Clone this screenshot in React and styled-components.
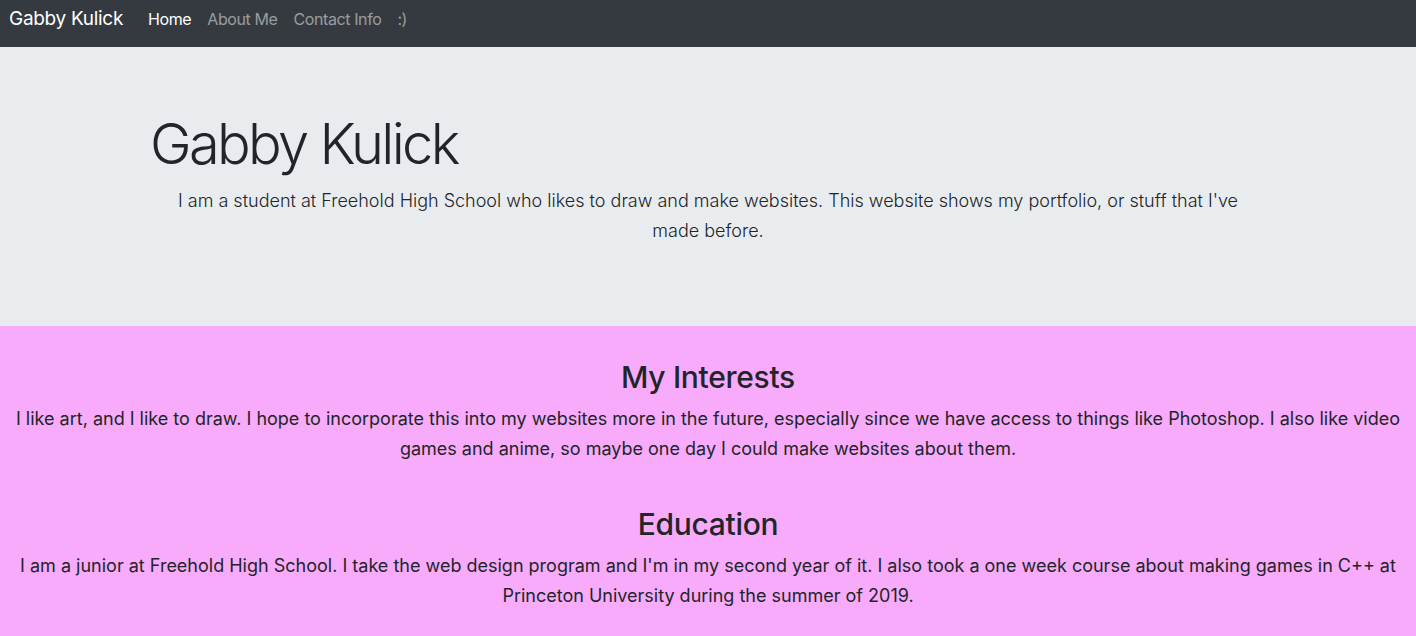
import React from "react";
import styled, { createGlobalStyle } from "styled-components";

const GlobalStyle = createGlobalStyle`
  html, body {
    margin: 0;
    padding: 0;
  }
  body {
    background: #f9abfb;
    color: #212529;
    font-family: Inter, "Noto Sans", "Liberation Sans", sans-serif;
  }
  * {
    box-sizing: border-box;
  }
`;

const Navbar = styled.nav`
  display: flex;
  align-items: flex-start;
  height: 47px;
  padding: 4px 9px 0;
  background: #343a40;
`;

const Brand = styled.a`
  font-size: 19px;
  line-height: 30px;
  color: #fff;
  margin-right: 17px;
  text-decoration: none;
  letter-spacing: -0.3px;
`;

const NavList = styled.ul`
  display: flex;
  margin: 0;
  padding: 0;
  list-style: none;
`;

const NavLink = styled.a`
  display: block;
  padding: 4px 8px;
  font-size: 16px;
  line-height: 22px;
  letter-spacing: -0.4px;
  text-decoration: none;
  color: ${({ active }) => (active ? "#fff" : "rgba(255, 255, 255, 0.5)")};
`;

const Jumbotron = styled.header`
  background: #e9ecef;
  padding: 64px 0;
  margin-bottom: 32px;
`;

const Container = styled.div`
  width: 1140px;
  margin: 0 auto;
  padding: 0 12px;
`;

const Display = styled.h1`
  margin: 0 0 8px;
  font-size: 56px;
  font-weight: 300;
  line-height: 67px;
  letter-spacing: -2.7px;
`;

const Lead = styled.p`
  margin: 0 auto 16px;
  max-width: 1080px;
  text-align: center;
  font-size: 18px;
  font-weight: 350;
  line-height: 30px;
`;

const Section = styled.section`
  text-align: center;
  padding: 0 8px;
  & + & {
    margin-top: 41px;
  }
`;

const Heading = styled.h2`
  margin: 0 0 8px;
  font-size: 30px;
  font-weight: 500;
  line-height: 38px;
  letter-spacing: -0.3px;
`;

const Text = styled.p`
  margin: 0 0 16px;
  font-size: 18px;
  line-height: 30px;
`;

const links = [
  { label: "Home", active: true },
  { label: "About Me" },
  { label: "Contact Info" },
  { label: ":)" },
];

export default function App() {
  return (
    <>
      <GlobalStyle />
      <Navbar>
        <Brand href="#">Gabby Kulick</Brand>
        <NavList>
          {links.map((l) => (
            <li key={l.label}>
              <NavLink href="#" active={l.active ? 1 : 0}>
                {l.label}
              </NavLink>
            </li>
          ))}
        </NavList>
      </Navbar>
      <Jumbotron>
        <Container>
          <Display>Gabby Kulick</Display>
          <Lead>
            I am a student at Freehold High School who likes to draw and make
            websites. This website shows my portfolio, or stuff that I've made
            before.
          </Lead>
        </Container>
      </Jumbotron>
      <Section>
        <Heading>My Interests</Heading>
        <Text>
          I like art, and I like to draw. I hope to incorporate this into my
          websites more in the future, especially since we have access to things
          like Photoshop. I also like video games and anime, so maybe one day I
          could make websites about them.
        </Text>
      </Section>
      <Section>
        <Heading>Education</Heading>
        <Text>
          I am a junior at Freehold High School. I take the web design program
          and I'm in my second year of it. I also took a one week course about
          making games in C++ at Princeton University during the summer of 2019.
        </Text>
      </Section>
    </>
  );
}
